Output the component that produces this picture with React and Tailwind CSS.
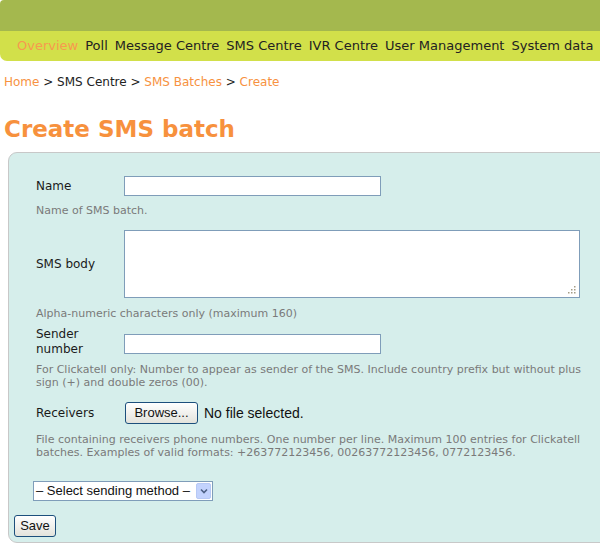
import React from 'react';

const navItems = ['Overview', 'Poll', 'Message Centre', 'SMS Centre', 'IVR Centre', 'User Management', 'System data', 'Reports'];

const Label = ({ children }) => (
  <div className="w-[88px] shrink-0 text-[12px] leading-[15px] text-[#1a1a1a]">{children}</div>
);

const Help = ({ children, className = '' }) => (
  <div className={`text-[11px] leading-[13px] text-[#7a7a7a] ${className}`}>{children}</div>
);

const App = () => {
  return (
    <div className="w-[600px] h-[546px] overflow-hidden bg-white font-['DejaVu_Sans',Verdana,sans-serif]">
      <div className="w-[720px]">
        <div className="h-[31px] bg-[#a4b84e] rounded-tl-[4px]" />
        <div className="h-[30px] bg-[#d2e04a] rounded-bl-[7px] flex items-center pl-[17px] gap-[7px] text-[13px] text-[#222] whitespace-nowrap">
          {navItems.map((item, i) => (
            <span key={item} className={i === 0 ? 'text-[#f79a4e]' : ''}>{item}</span>
          ))}
        </div>
      </div>

      <div className="mt-[14px] pl-[4px] text-[12px] leading-[15px] text-[#222] whitespace-nowrap">
        <span className="text-[#f7923f]">Home</span> &gt; SMS Centre &gt;{' '}
        <span className="text-[#f7923f]">SMS Batches</span> &gt;{' '}
        <span className="text-[#f7923f]">Create</span>
      </div>

      <h1 className="mt-[24px] pl-[4px] text-[23px] leading-[30px] font-bold text-[#f7913d] whitespace-nowrap">
        Create SMS batch
      </h1>

      <div className="mt-[8px] ml-[8px] w-[700px] h-[391px] bg-[#d6eeeb] border border-[#c8c8c8] rounded-l-[9px] pt-[23px] pl-[27px]">
        <div className="flex items-center">
          <Label>Name</Label>
          <div className="w-[257px] h-[20px] bg-white border border-[#7f9db9]" />
        </div>
        <Help className="mt-[8px]">Name of SMS batch.</Help>

        <div className="flex items-center mt-[13px]">
          <Label>SMS body</Label>
          <div className="relative w-[456px] h-[68px] bg-white border border-[#7f9db9]">
            <svg className="absolute right-[2px] bottom-[2px]" width="10" height="10" viewBox="0 0 10 10">
              <g fill="#a59d86">
                <rect x="7" y="1" width="1.5" height="1.5" />
                <rect x="4" y="4" width="1.5" height="1.5" />
                <rect x="7" y="4" width="1.5" height="1.5" />
                <rect x="1" y="7" width="1.5" height="1.5" />
                <rect x="4" y="7" width="1.5" height="1.5" />
                <rect x="7" y="7" width="1.5" height="1.5" />
              </g>
            </svg>
          </div>
        </div>
        <Help className="mt-[9px]">Alpha-numeric characters only (maximum 160)</Help>

        <div className="flex items-center mt-[7px]">
          <Label>Sender<br />number</Label>
          <div className="w-[257px] h-[20px] mt-[3px] bg-white border border-[#7f9db9]" />
        </div>
        <Help className="mt-[6px] w-[570px]">
          For Clickatell only: Number to appear as sender of the SMS. Include country prefix but without plus sign (+) and double zeros (00).
        </Help>

        <div className="flex items-center mt-[13px]">
          <Label>Receivers</Label>
          <div className="flex items-center">
            <div className="ml-[1px] w-[73px] h-[22px] rounded-[3px] border border-[#1c4f7c] bg-gradient-to-b from-white to-[#e3e3dc] flex items-center justify-center text-[13px] text-[#111] font-['Liberation_Sans',Arial,sans-serif]">
              Browse...
            </div>
            <span className="ml-[6px] text-[14px] text-[#111] font-['Liberation_Sans',Arial,sans-serif]">No file selected.</span>
          </div>
        </div>
        <Help className="mt-[9px] w-[570px]">
          File containing receivers phone numbers. One number per line. Maximum 100 entries for Clickatell batches. Examples of valid formats: +263772123456, 00263772123456, 0772123456.
        </Help>

        <div className="mt-[22px] -ml-[3px] w-[180px] h-[20px] bg-white border border-[#7f9db9] flex items-center justify-between pl-[2px] pr-[1px] font-['Liberation_Sans',Arial,sans-serif] text-[13px] text-[#111]">
          <span>– Select sending method –</span>
          <div className="w-[15px] h-[16px] rounded-[2px] bg-[#c3d3fd] border border-[#b7c9f5] flex items-center justify-center">
            <svg width="8" height="6" viewBox="0 0 8 6">
              <path d="M1 1.5 L4 4.5 L7 1.5" fill="none" stroke="#4d6185" strokeWidth="1.6" />
            </svg>
          </div>
        </div>

        <div className="mt-[14px] -ml-[22px] w-[42px] h-[22px] rounded-[3px] border border-[#1c4f7c] bg-gradient-to-b from-white to-[#e3e3dc] flex items-center justify-center text-[13px] text-[#111] font-['Liberation_Sans',Arial,sans-serif]">
          Save
        </div>
      </div>
    </div>
  );
};

export default App;
